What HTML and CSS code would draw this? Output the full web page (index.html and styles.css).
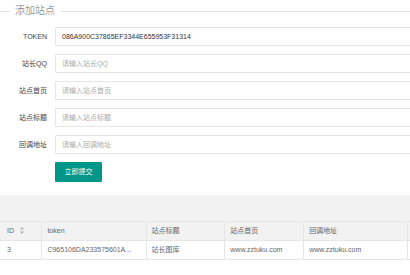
FILE: index.html
```html
<!DOCTYPE html>
<html lang="zh-CN">
<head>
<meta charset="utf-8">
<title>添加站点</title>
<link rel="stylesheet" href="styles.css">
</head>
<body>
<div class="page">
  <fieldset class="field-title">
    <legend>添加站点</legend>
  </fieldset>
  <form class="form">
    <div class="form-item">
      <label class="form-label">TOKEN</label>
      <input class="form-input" type="text" value="086A900C37865EF3344E655953F31314">
    </div>
    <div class="form-item">
      <label class="form-label">站长QQ</label>
      <input class="form-input" type="text" placeholder="请输入站长QQ">
    </div>
    <div class="form-item">
      <label class="form-label">站点首页</label>
      <input class="form-input" type="text" placeholder="请输入站点首页">
    </div>
    <div class="form-item">
      <label class="form-label">站点标题</label>
      <input class="form-input" type="text" placeholder="请输入站点标题">
    </div>
    <div class="form-item">
      <label class="form-label">回调地址</label>
      <input class="form-input" type="text" placeholder="请输入回调地址">
    </div>
    <div class="form-actions">
      <button class="btn" type="button">立即提交</button>
    </div>
  </form>
  <div class="band"></div>
  <table class="table">
    <thead>
      <tr>
        <th class="c-id">ID <svg class="sort" width="4" height="7" viewBox="0 0 4 7"><path d="M2 0 L4 2.6 L0 2.6 Z M0 4.4 L4 4.4 L2 7 Z" fill="#b2b2b2"/></svg></th>
        <th class="c-token">token</th>
        <th class="c-title">站点标题</th>
        <th class="c-home">站点首页</th>
        <th class="c-cb">回调地址</th>
        <th class="c-more">站点ID</th>
      </tr>
    </thead>
    <tbody>
      <tr>
        <td class="c-id">3</td>
        <td class="c-token">C965106DA233575601A...</td>
        <td class="c-title">站长图库</td>
        <td class="c-home">www.zztuku.com</td>
        <td class="c-cb">www.zztuku.com</td>
        <td class="c-more">1</td>
      </tr>
    </tbody>
  </table>
</div>
</body>
</html>
```
FILE: styles.css
```css
html, body {
  margin: 0;
  padding: 0;
  background: #fff;
  overflow: hidden;
}

body {
  font-family: "Liberation Sans", "Noto Sans CJK SC", sans-serif;
  font-size: 7px;
  color: #666;
}

.page {
  width: 480px;
}

.field-title {
  margin: 5px 0 0;
  padding: 0;
  border: 0;
  border-top: 1px solid #e6e6e6;
  min-width: 0;
}

.field-title legend {
  margin-left: 10px;
  padding: 0 5px;
  font-size: 10px;
  line-height: 12px;
  font-weight: 300;
  color: #666;
}

.form {
  margin: 0;
  padding-top: 10px;
}

.form-item {
  display: flex;
  align-items: center;
  height: 19px;
  margin-bottom: 8px;
}

.form-label {
  width: 47px;
  padding-right: 8px;
  text-align: right;
  color: #444;
  font-size: 7px;
  line-height: 19px;
  flex: none;
}

.form-input {
  flex: 1;
  height: 19px;
  box-sizing: border-box;
  border: 1px solid #e6e6e6;
  border-radius: 1px;
  padding: 0 0 0 6px;
  margin: 0;
  font-family: "Liberation Sans", "Noto Sans CJK SC", sans-serif;
  font-size: 7px;
  color: #333;
  background: #fff;
  outline: none;
}

.form-input::placeholder {
  color: #aaa;
}

.form-actions {
  padding-left: 55px;
}

.btn {
  display: block;
  height: 20px;
  width: 47px;
  padding: 0;
  border: 0;
  border-radius: 1px;
  background: #009688;
  color: #fff;
  font-family: "Liberation Sans", "Noto Sans CJK SC", sans-serif;
  font-size: 7px;
  line-height: 20px;
  text-align: center;
}

.band {
  margin-top: 13px;
  height: 26px;
  background: #f2f2f2;
}

.table {
  border-collapse: collapse;
  table-layout: fixed;
  width: 480px;
}

.table th,
.table td {
  height: 18px;
  padding: 0 5px;
  border: 1px solid #e6e6e6;
  text-align: left;
  font-weight: normal;
  color: #666;
  white-space: nowrap;
  overflow: hidden;
  font-size: 7px;
  line-height: 18px;
}

.table th {
  background: #f2f2f2;
}

.table tr > :first-child {
  border-left: 0;
}

.c-id { width: 29px; padding-left: 7px !important; }
.c-token { width: 92px; }
.c-title { width: 67px; }
.c-home { width: 67px; }
.c-cb { width: 92px; }
.c-more { width: 60px; }

.sort {
  margin-left: 4px;
  vertical-align: -1px;
}
```
